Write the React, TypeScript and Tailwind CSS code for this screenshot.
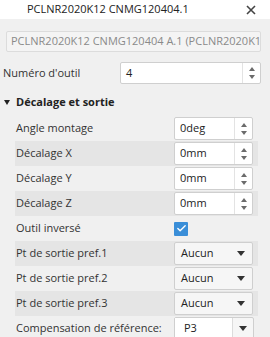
import { Check } from "lucide-react";

type Row =
  | { kind: "spin"; label: string; value: string }
  | { kind: "check"; label: string }
  | { kind: "select"; label: string; value: string };

const ROWS: Row[] = [
  { kind: "spin", label: "Angle montage", value: "0deg" },
  { kind: "spin", label: "Décalage X", value: "0mm" },
  { kind: "spin", label: "Décalage Y", value: "0mm" },
  { kind: "spin", label: "Décalage Z", value: "0mm" },
  { kind: "check", label: "Outil inversé" },
  { kind: "select", label: "Pt de sortie pref.1", value: "Aucun" },
  { kind: "select", label: "Pt de sortie pref.2", value: "Aucun" },
  { kind: "select", label: "Pt de sortie pref.3", value: "Aucun" },
];

const Spinner = () => (
  <div className="flex h-full w-[18px] flex-col items-center justify-center gap-[4px] border-l border-[#e3e3e3]">
    <span className="h-0 w-0 border-x-[3px] border-b-[4px] border-x-transparent border-b-[#6b6b6b]" />
    <span className="h-0 w-0 border-x-[3px] border-t-[4px] border-x-transparent border-t-[#6b6b6b]" />
  </div>
);

const Caret = () => (
  <span className="h-0 w-0 border-x-[4px] border-t-[5px] border-x-transparent border-t-[#333]" />
);

const SpinBox = ({ value, className }: { value: string; className: string }) => (
  <div className={`flex items-center rounded-[2px] border border-[#cfcfcf] bg-white ${className}`}>
    <span className="flex-1 pl-[5px] text-[#222]">{value}</span>
    <Spinner />
  </div>
);

const App = () => {
  return (
    <div
      className="h-[337px] w-[270px] overflow-hidden whitespace-nowrap bg-[#f0f0f0] text-[11px] text-[#333]"
      style={{ fontFamily: '"Open Sans", "Noto Sans", sans-serif' }}
    >
      {/* Header */}
      <div className="flex h-[19px] items-center bg-white pl-[27px] pr-[14px]">
        <span className="flex-1 text-[#222]">PCLNR2020K12 CNMG120404.1</span>
        <svg width="10" height="10" viewBox="0 0 10 10" className="mt-[1px]">
          <path d="M1 1 L9 9 M9 1 L1 9" stroke="#444" strokeWidth="1.6" />
        </svg>
      </div>

      {/* Name field */}
      <div className="mx-[6px] mt-[12px] flex h-[21px] w-[255px] items-center overflow-hidden rounded-[2px] border border-[#dcdcdc] bg-[#f4f4f4] pl-[4px] text-[#8a8a8a]">
        <span className="overflow-hidden">PCLNR2020K12 CNMG120404 A.1 (PCLNR2020K12 CNMG120404)</span>
      </div>

      {/* Tool number */}
      <div className="mt-[10px] flex h-[22px] items-center pl-[3px]">
        <span className="w-[117px]">Numéro d'outil</span>
        <SpinBox value="4" className="h-[22px] w-[141px]" />
      </div>

      {/* Section */}
      <div className="mt-[8px] flex h-[20px] items-center pl-[4px] font-bold text-[#222]">
        <span className="mr-[6px] h-0 w-0 border-x-[3.5px] border-t-[5px] border-x-transparent border-t-[#222]" />
        Décalage et sortie
      </div>

      <div className="ml-[15px] mt-[4px] w-[243px]">
        {ROWS.map((row, i) => (
          <div
            key={row.label}
            className={`flex h-[25px] items-center pl-[1px] ${i % 2 === 1 ? "bg-[#e5e5e5]" : ""}`}
          >
            <span className="w-[158px]">{row.label}</span>
            {row.kind === "spin" && <SpinBox value={row.value} className="h-[23px] w-[79px]" />}
            {row.kind === "check" && (
              <span className="flex h-[14px] w-[14px] items-center justify-center rounded-[1px] bg-[#3a8ed8]">
                <Check className="h-[11px] w-[11px] text-white" strokeWidth={3} />
              </span>
            )}
            {row.kind === "select" && (
              <div className="flex h-[23px] w-[79px] items-center rounded-[2px] border border-[#cfcfcf] bg-[#f6f6f6] pl-[6px] pr-[7px]">
                <span className="flex-1 text-[#222]">{row.value}</span>
                <Caret />
              </div>
            )}
          </div>
        ))}

        <div className="flex h-[25px] items-center pl-[1px]">
          <span className="w-[158px]">Compensation de référence:</span>
          <div className="flex h-[24px] w-[80px] items-center rounded-[2px] border border-[#cfcfcf] bg-[#f6f6f6]">
            <span className="flex h-full flex-1 items-center bg-white pl-[9px] text-[#222]">P3</span>
            <span className="flex h-full w-[21px] items-center justify-center border-l border-[#dcdcdc]">
              <Caret />
            </span>
          </div>
        </div>
      </div>
    </div>
  );
};

export default App;
